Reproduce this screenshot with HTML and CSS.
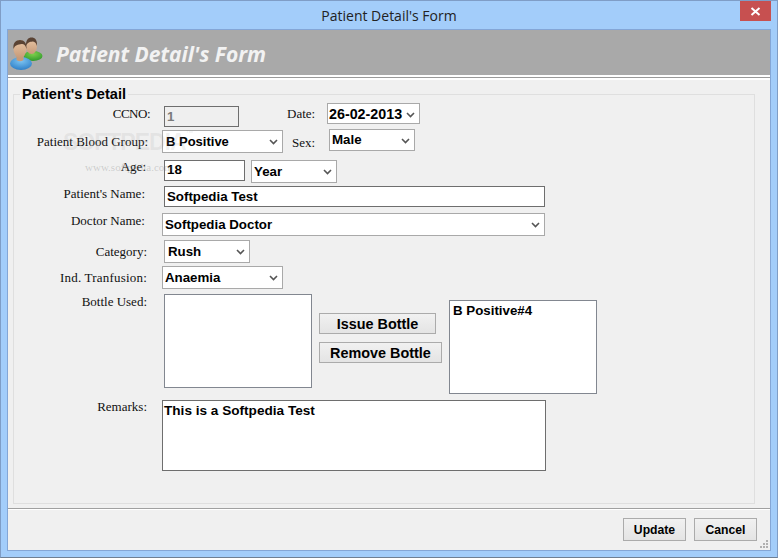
FILE: index.html
```html
<!DOCTYPE html>
<html lang="en">
<head>
  <meta charset="UTF-8">
  <title>Patient Detail's Form</title>
  <link rel="stylesheet" href="styles.css">
</head>
<body>

<div class="window">
  <div class="titlebar">
    <span class="title">Patient Detail's Form</span>
    <div class="close">
      <svg width="11" height="9" viewBox="0 0 11 9"><path d="M1.5 1 L9.5 8 M9.5 1 L1.5 8" stroke="#fff" stroke-width="2" fill="none"/></svg>
    </div>
  </div>

  <div class="client">
    <div class="banner">
      <svg class="banner-icon" width="36" height="34" viewBox="0 0 36 34">
        <defs>
          <radialGradient id="green" cx="50%" cy="30%" r="70%"><stop offset="0" stop-color="#7fd04c"/><stop offset="1" stop-color="#2f9a2c"/></radialGradient>
          <radialGradient id="blue" cx="50%" cy="30%" r="70%"><stop offset="0" stop-color="#7cc4f2"/><stop offset="1" stop-color="#2f80c8"/></radialGradient>
          <linearGradient id="skin" x1="0" y1="0" x2="0" y2="1"><stop offset="0" stop-color="#e8c6a6"/><stop offset="1" stop-color="#c79a78"/></linearGradient>
        </defs>
        <ellipse cx="23" cy="19" rx="9.500" ry="5" fill="url(#green)"/>
        <ellipse cx="21.500" cy="9" rx="5.500" ry="8" fill="url(#skin)"/>
        <path d="M16 9 C15.500 3 18.500 0.500 21.500 0.500 C25 0.500 27.500 3 27 9 C26 5.500 24.500 4.500 22.500 4.500 C20 5 17.500 5 16 9z" fill="#5a4334"/>
        <ellipse cx="11" cy="26.500" rx="11" ry="6.500" fill="url(#blue)"/>
        <path d="M6.500 18 h7 v5 q-3.500 2.500 -7 0z" fill="#c79a78"/>
        <ellipse cx="10" cy="12" rx="6.500" ry="9" fill="url(#skin)"/>
        <path d="M3.500 12 C2.500 6 6 3 10 3 C14 3 17 6 16.500 12 C15.500 8 14 7 11.500 7 C8 7.500 5 8 3.500 12z" fill="#5a4334"/>
      </svg>
      <span class="banner-text">Patient Detail's Form</span>
    </div>
    <div class="banner-rule"></div>

    <div class="main">
      <fieldset class="group">
        <legend>Patient's Detail</legend>

        <div class="row row-ccno">
          <label class="lbl lbl-ccno">CCNO:</label>
          <div class="field readonly w-ccno">1</div>
          <label class="lbl-date">Date:</label>
          <div class="combo w-date">26-02-2013<svg class="arrow" width="9" height="6" viewBox="0 0 9 6"><path d="M1 1 L4.500 4.500 L8 1" /></svg></div>
        </div>

        <div class="row row-blood">
          <label class="lbl lbl-blood">Patient Blood Group:</label>
          <div class="combo w-blood">B Positive<svg class="arrow" width="9" height="6" viewBox="0 0 9 6"><path d="M1 1 L4.500 4.500 L8 1" /></svg></div>
          <label class="lbl-sex">Sex:</label>
          <div class="combo w-sex">Male<svg class="arrow" width="9" height="6" viewBox="0 0 9 6"><path d="M1 1 L4.500 4.500 L8 1" /></svg></div>
        </div>

        <div class="row row-age">
          <label class="lbl lbl-age">Age:</label>
          <div class="field w-age">18</div>
          <div class="combo w-unit">Year<svg class="arrow" width="9" height="6" viewBox="0 0 9 6"><path d="M1 1 L4.500 4.500 L8 1" /></svg></div>
        </div>

        <div class="row row-name">
          <label class="lbl lbl-name">Patient's Name:</label>
          <div class="field w-name">Softpedia Test</div>
        </div>

        <div class="row row-doctor">
          <label class="lbl lbl-doctor">Doctor Name:</label>
          <div class="combo w-doctor">Softpedia Doctor<svg class="arrow" width="9" height="6" viewBox="0 0 9 6"><path d="M1 1 L4.500 4.500 L8 1" /></svg></div>
        </div>

        <div class="row row-category">
          <label class="lbl lbl-category">Category:</label>
          <div class="combo w-category">Rush<svg class="arrow" width="9" height="6" viewBox="0 0 9 6"><path d="M1 1 L4.500 4.500 L8 1" /></svg></div>
        </div>

        <div class="row row-ind">
          <label class="lbl lbl-ind">Ind. Tranfusion:</label>
          <div class="combo w-ind">Anaemia<svg class="arrow" width="9" height="6" viewBox="0 0 9 6"><path d="M1 1 L4.500 4.500 L8 1" /></svg></div>
        </div>

        <div class="row row-bottle">
          <label class="lbl lbl-bottle">Bottle Used:</label>
          <div class="listbox w-list-left"></div>
          <div class="bottle-buttons">
            <div class="btn w-issue">Issue Bottle</div>
            <div class="btn w-remove">Remove Bottle</div>
          </div>
          <div class="listbox w-list-right">B Positive#4</div>
        </div>

        <div class="row row-remarks">
          <label class="lbl lbl-remarks">Remarks:</label>
          <div class="memo">This is a Softpedia Test</div>
        </div>
      </fieldset>
    </div>

    <div class="footer">
      <div class="btn btn-foot">Update</div>
      <div class="btn btn-foot">Cancel</div>
      <svg class="grip" width="8" height="8" viewBox="0 0 8 8" fill="#b0b0b0">
        <rect x="6" y="0" width="2" height="2"/><rect x="3" y="3" width="2" height="2"/><rect x="6" y="3" width="2" height="2"/>
        <rect x="0" y="6" width="2" height="2"/><rect x="3" y="6" width="2" height="2"/><rect x="6" y="6" width="2" height="2"/>
      </svg>
    </div>

    <div class="watermark">SOFTPEDIA<span class="tm">™</span></div>
    <div class="watermark-url">www.softpedia.com</div>
  </div>
</div>

</body>
</html>
```

FILE: styles.css
```css
* {
  box-sizing: border-box;
}

body {
  margin: 0;
  width: 778px;
  height: 558px;
  overflow: hidden;
  font-family: 'Liberation Sans', Arial, sans-serif;
  font-size: 13.3px;
  font-weight: bold;
  color: #000;
}

.window {
  width: 778px;
  height: 558px;
  display: flex;
  flex-direction: column;
  padding: 0 6px 6px;
  background: #a3cdfa;
  border: 1px solid #7f9dc6;
  border-bottom-color: #6f7f93;
}

.titlebar {
  height: 28px;
  position: relative;
  display: flex;
  align-items: center;
  justify-content: center;
  flex: none;
}

.title {
  font-family: 'Open Sans', sans-serif;
  font-weight: normal;
  font-size: 14px;
  color: #222;
  margin-top: 1px;
}

.close {
  position: absolute;
  top: 0;
  right: 0;
  width: 31px;
  height: 20px;
  background: #c75050;
  display: flex;
  align-items: center;
  justify-content: center;
}

.client {
  flex: 1;
  position: relative;
  display: flex;
  flex-direction: column;
  background: #f0f0f0;
  border: 1px solid #84a6d6;
}

/* header strip */
.banner {
  height: 45px;
  flex: none;
  display: flex;
  align-items: center;
  background: #a9a9a9;
}

.banner-icon {
  margin-left: 2px;
  margin-top: 2px;
}

.banner-text {
  margin-left: 10px;
  margin-top: 2px;
  font-family: 'Open Sans', sans-serif;
  font-style: italic;
  font-weight: bold;
  font-size: 21px;
  color: #f2f2f2;
}

.banner-rule {
  height: 5px;
  flex: none;
  background: #fff;
  border-top: 2px solid #fff;
  position: relative;
}

.banner-rule::after {
  content: '';
  display: block;
  height: 1px;
  background: #9a9a9a;
}

.main {
  flex: 1;
  padding: 0 15px 0 5px;
}

.group {
  margin: 6px 0 0;
  padding: 0;
  height: 418px;
  border: 1px solid #dfdfdf;
}

.group legend {
  margin-left: 6px;
  padding: 0 2px;
  height: 16px;
  line-height: 16px;
  font-size: 14.6px;
}

/* rows */
.row {
  display: flex;
  align-items: flex-start;
}

.row-ccno { height: 25px; margin-top: 1px; }
.row-blood { height: 24px; margin-top: 2px; }
.row-age { height: 23px; margin-top: 6px; }
.row-name { height: 21px; margin-top: 3px; }
.row-doctor { height: 23px; margin-top: 6px; }
.row-category { height: 23px; margin-top: 4px; }
.row-ind { height: 23px; margin-top: 3px; }
.row-bottle { height: 100px; margin-top: 5px; }
.row-remarks { height: 71px; margin-top: 6px; }

.lbl,
.lbl-date,
.lbl-sex {
  font-family: 'Liberation Serif', 'Times New Roman', serif;
  font-weight: normal;
  font-size: 13px;
  line-height: 14px;
  color: #111;
  text-align: right;
  white-space: nowrap;
  flex: none;
}

.lbl { width: 133px; }
.lbl-ccno { width: 136px; margin-top: 4px; letter-spacing: -0.5px; }
.lbl-blood { width: 134px; margin-top: 5px; }
.lbl-age { width: 132px; margin-top: 0; }
.lbl-name { width: 131px; margin-top: 1px; }
.lbl-doctor { width: 131px; margin-top: 1px; }
.lbl-category { margin-top: 5px; }
.lbl-ind { margin-top: 5px; letter-spacing: 0.2px; }
.lbl-bottle { margin-top: 1px; }
.lbl-remarks { margin-top: 0; }

.lbl-date { margin: 4px 0 0 48px; width: 28px; }
.lbl-sex { margin: 6px 0 0 9px; width: 23px; }

/* controls */
.field,
.combo,
.listbox,
.memo {
  flex: none;
  background: #fff;
  white-space: nowrap;
}

.field {
  height: 21px;
  line-height: 19px;
  padding-left: 2px;
  border: 1px solid #6e6e6e;
}

.readonly {
  background: #efefef;
  color: #7a7a7a;
  font-weight: bold;
}

.combo {
  height: 23px;
  line-height: 21px;
  padding-left: 2px;
  border: 1px solid #a9a9a9;
  position: relative;
}

.arrow {
  position: absolute;
  right: 4px;
  top: 8px;
}

.arrow path {
  fill: none;
  stroke: #555;
  stroke-width: 1.6;
}

.w-ccno { width: 75px; margin: 3px 0 0 14px; }
.w-date { width: 93px; height: 21px; line-height: 21px; margin-left: 12px; font-size: 14.3px; padding-left: 1px; }
.w-blood { width: 121px; line-height: 22px; margin-left: 14px; padding-left: 3px; font-size: 13px; }
.w-sex { width: 86px; height: 22px; line-height: 20px; margin: -1px 0 0 14px; padding-left: 2px; }
.w-age { width: 81px; line-height: 18px; margin-left: 18px; }
.w-unit { width: 86px; line-height: 22px; margin-left: 6px; }
.w-name { width: 381px; margin-left: 19px; }
.w-doctor { width: 383px; margin-left: 17px; padding-left: 2px; }
.w-category { width: 86px; margin-left: 17px; padding-left: 3px; }
.w-ind { width: 121px; margin-left: 15px; }

.listbox {
  width: 148px;
  height: 94px;
  border: 1px solid #828790;
  padding: 2px 3px;
  line-height: 16px;
}

.w-list-left { margin-left: 17px; }
.w-list-right { margin: 6px 0 0 7px; }

.bottle-buttons {
  flex: none;
  display: flex;
  flex-direction: column;
  align-items: flex-start;
  gap: 8px;
  margin: 19px 0 0 7px;
  width: 123px;
}

.btn {
  height: 21px;
  line-height: 21px;
  text-align: center;
  background: linear-gradient(#f1f1f1, #e4e4e4);
  border: 1px solid #ababab;
  white-space: nowrap;
  font-size: 14.4px;
}

.w-issue { width: 117px; }
.w-remove { width: 123px; }

.memo {
  width: 384px;
  height: 71px;
  margin-left: 15px;
  border: 1px solid #6e6e6e;
  padding: 2px 1px;
  line-height: 15px;
  font-size: 13.6px;
}

/* bottom bar */
.footer {
  flex: none;
  height: 42px;
  position: relative;
  display: flex;
  justify-content: flex-end;
  gap: 8px;
  padding: 9px 13px 0 0;
  border-top: 1px solid #a0a0a0;
  box-shadow: inset 0 1px 0 #fff;
}

.btn-foot {
  width: 63px;
  height: 23px;
  line-height: 22px;
  font-size: 12.2px;
}

.grip {
  position: absolute;
  right: 2px;
  bottom: 2px;
}

/* faint site stamp over the form */
.watermark {
  position: absolute;
  left: 55px;
  top: 99px;
  font-size: 23px;
  font-weight: bold;
  color: rgba(140, 140, 140, 0.13);
  letter-spacing: -1px;
}

.tm {
  font-size: 8px;
  vertical-align: top;
}

.watermark-url {
  position: absolute;
  left: 77px;
  top: 131px;
  font-family: 'Liberation Serif', serif;
  font-weight: normal;
  font-size: 11px;
  color: rgba(120, 120, 120, 0.3);
}
```
